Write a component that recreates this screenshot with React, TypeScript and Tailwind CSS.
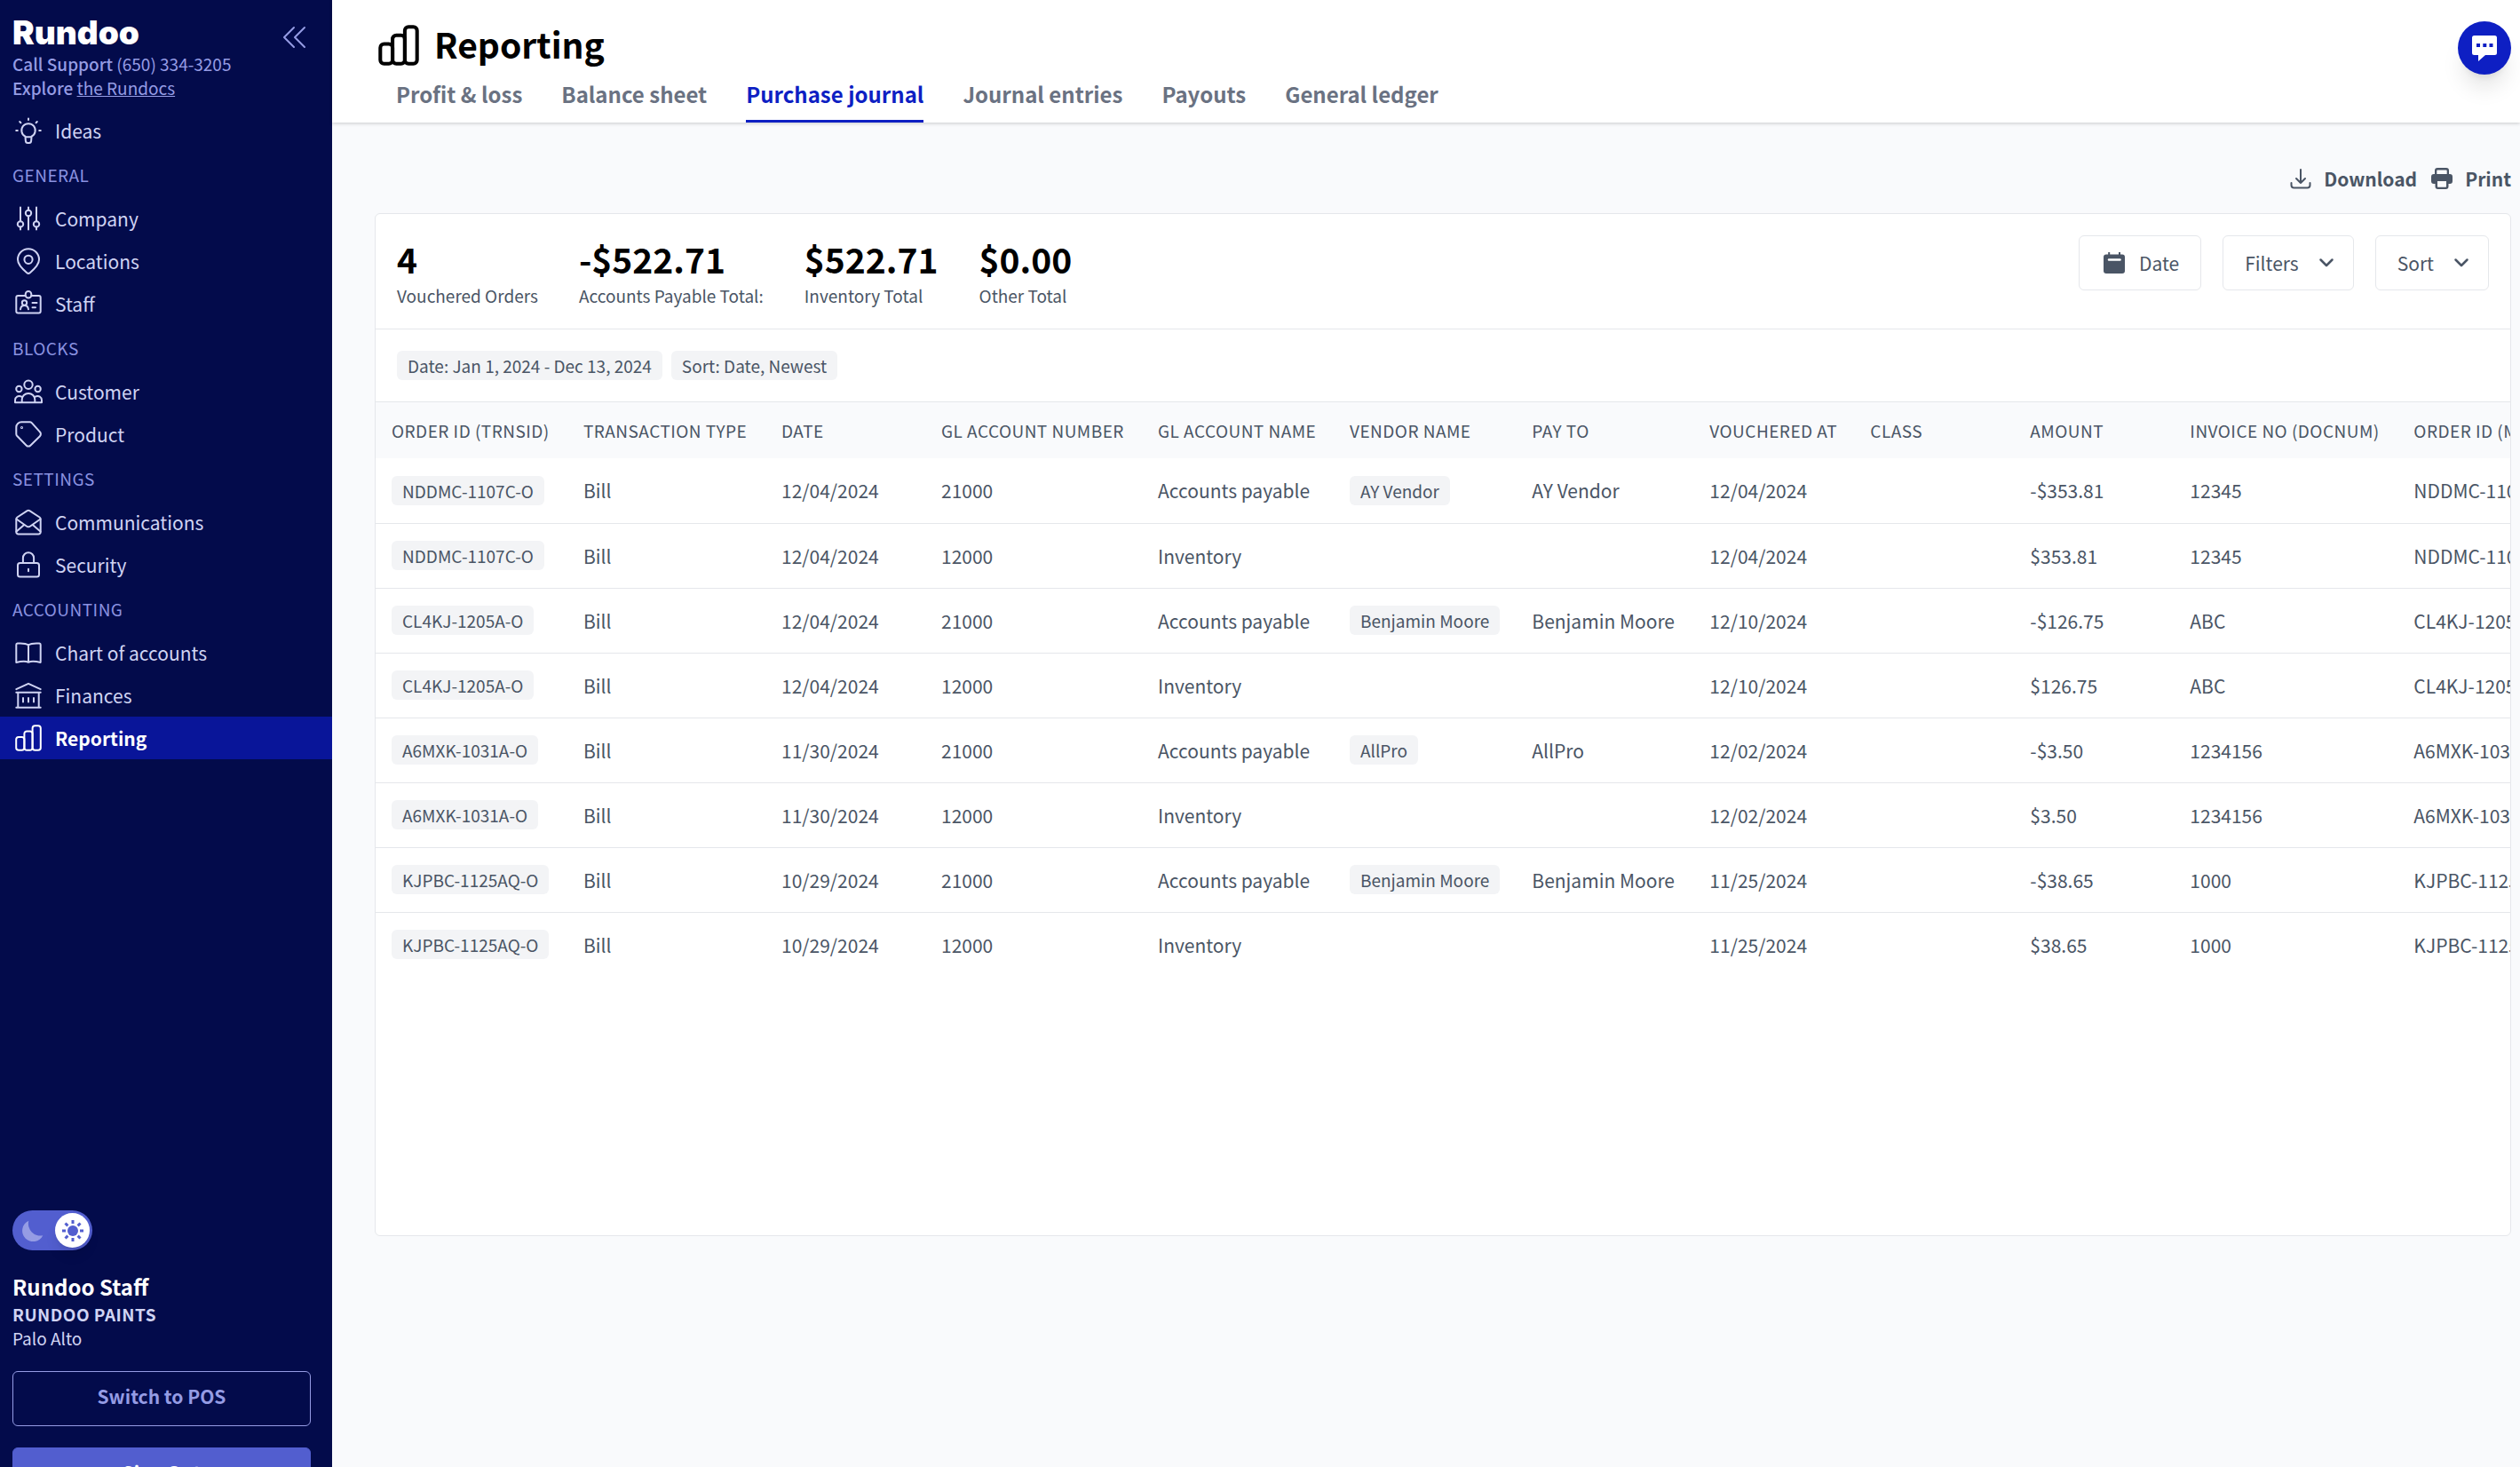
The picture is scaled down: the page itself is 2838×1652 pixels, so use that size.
import React, { useState } from 'react';

type IconProps = { className?: string; strokeWidth?: number };

const Icon: React.FC<IconProps & { children: React.ReactNode }> = ({ className = 'w-8 h-8', strokeWidth = 2, children }) => (
  <svg
    viewBox="0 0 32 32"
    className={`${className} shrink-0`}
    fill="none"
    stroke="currentColor"
    strokeWidth={strokeWidth}
    strokeLinecap="round"
    strokeLinejoin="round"
    aria-hidden="true"
  >
    {children}
  </svg>
);

const IdeasIcon = () => (
  <Icon>
    <path d="M12.5 23.3v-.6a7.7 7.7 0 1 1 7 0v.6M12.5 23.3h7l-.4 4.6a2.2 2.2 0 0 1-2.2 2h-1.8a2.2 2.2 0 0 1-2.2-2z" />
    <path d="M16 2.5v1.6M2.2 16h1.6M28.2 16h1.6M6.2 6l1.2 1.2M25.8 6l-1.2 1.2" />
  </Icon>
);

const CompanyIcon = () => (
  <Icon>
    <circle cx="7" cy="22.4" r="3.2" />
    <circle cx="16" cy="10" r="3.2" />
    <circle cx="25" cy="22.4" r="3.2" />
    <path d="M7 3.5v15.7M7 25.6v3M16 3.5v3.3M16 13.2v15.4M25 3.5v15.7M25 25.6v3" />
  </Icon>
);

const LocationsIcon = () => (
  <Icon>
    <path d="M16 2.3a12 12 0 0 1 12 12c0 5.7-6.2 11.5-10.3 14.9a2.7 2.7 0 0 1-3.4 0C10.2 25.8 4 20 4 14.3a12 12 0 0 1 12-12z" />
    <circle cx="16" cy="14.3" r="4.6" />
  </Icon>
);

const StaffIcon = () => (
  <Icon>
    <path d="M12.5 7H4.3a2 2 0 0 0-2 2v15.5a2 2 0 0 0 2 2h23.4a2 2 0 0 0 2-2V9a2 2 0 0 0-2-2h-8.2" />
    <rect x="12.7" y="2" width="6.6" height="7.6" rx="3.3" />
    <circle cx="11.5" cy="15" r="2.7" />
    <path d="M7 22.3c.3-2.7 2-4.3 4.5-4.3s4.2 1.6 4.5 4.3M20.5 15h5M20.5 20.3h3.5" />
  </Icon>
);

const CustomerIcon = () => (
  <Icon>
    <circle cx="16" cy="8.3" r="4.7" />
    <circle cx="5.4" cy="13" r="3.2" />
    <circle cx="26.6" cy="13" r="3.2" />
    <path d="M8.7 28.2v-3a7.3 7.3 0 0 1 14.6 0v3M1 28.2h30M1 28.2v-2.5c0-3.8 3.6-6 7.3-4M31 28.2v-2.5c0-3.8-3.6-6-7.3-4" />
  </Icon>
);

const ProductIcon = () => (
  <Icon>
    <path d="M8.3 2.3h9.4c.8 0 1.5.3 2 .8l9.2 10.2a3.5 3.5 0 0 1 0 4.9L18.2 28.7a3.1 3.1 0 0 1-4.4 0L3.1 17.8a3 3 0 0 1-.8-2V8.3a6 6 0 0 1 6-6z" />
    <circle cx="8.5" cy="8.5" r="0.5" />
  </Icon>
);

const CommunicationsIcon = () => (
  <Icon>
    <path d="M2.3 12.5c0-.9.4-1.5 1.1-2l11.3-7.3a2.4 2.4 0 0 1 2.6 0l11.3 7.3c.7.5 1.1 1.1 1.1 2v14.7a2.3 2.3 0 0 1-2.3 2.3H4.6a2.3 2.3 0 0 1-2.3-2.3z" />
    <path d="M2.5 12.5l11.3 8a3.8 3.8 0 0 0 4.4 0l11.3-8M2.5 26.5l8.7-7.5M29.5 26.5l-8.7-7.5" />
  </Icon>
);

const SecurityIcon = () => (
  <Icon>
    <rect x="4" y="14" width="24" height="15.5" rx="2.5" />
    <path d="M9.9 14V8.3a6.1 6.1 0 0 1 12.2 0V14M16 20.7v2.6" />
  </Icon>
);

const ChartIcon = () => (
  <Icon>
    <path d="M16 7.3C13.5 5.6 9.5 5.1 3.6 5.5a1.4 1.4 0 0 0-1.3 1.4v20c5.7-1.2 10.7-1.4 13.7-.2 3-1.2 8-1 13.7.2v-20a1.4 1.4 0 0 0-1.3-1.4C22.5 5.1 18.5 5.6 16 7.3zM16 7.3v19.4" />
  </Icon>
);

const FinancesIcon = () => (
  <Icon>
    <path d="M2.3 9.2L16 2.8l13.7 6.4M2.3 12.7h27.4M4.3 12.7v17M27.7 12.7v17M2.3 29.7h27.4M10 19v4.5M16 19v4.5M22 19v4.5" />
  </Icon>
);

const ReportingIcon: React.FC<IconProps> = (props) => (
  <Icon {...props}>
    <rect x="2.2" y="15" width="9.2" height="14.8" rx="2.8" />
    <path d="M11.4 17.5v-6.2a2.8 2.8 0 0 1 2.8-2.8h3.6a2.8 2.8 0 0 1 2.8 2.8V27a2.8 2.8 0 0 1-2.8 2.8h-3.6a2.8 2.8 0 0 1-2.8-2.8z" />
    <rect x="20.6" y="2.2" width="9.2" height="27.6" rx="2.8" />
  </Icon>
);

const ChevronDown = () => (
  <svg viewBox="0 0 18 18" className="w-[18px] h-[18px]" fill="none" stroke="currentColor" strokeWidth="2.5" strokeLinecap="round" strokeLinejoin="round" aria-hidden="true">
    <path d="M2.5 5.5L9 12l6.5-6.5" />
  </svg>
);

const navGroups = [
  { title: '', items: [{ label: 'Ideas', icon: <IdeasIcon /> }] },
  {
    title: 'General',
    items: [
      { label: 'Company', icon: <CompanyIcon /> },
      { label: 'Locations', icon: <LocationsIcon /> },
      { label: 'Staff', icon: <StaffIcon /> },
    ],
  },
  {
    title: 'Blocks',
    items: [
      { label: 'Customer', icon: <CustomerIcon /> },
      { label: 'Product', icon: <ProductIcon /> },
    ],
  },
  {
    title: 'Settings',
    items: [
      { label: 'Communications', icon: <CommunicationsIcon /> },
      { label: 'Security', icon: <SecurityIcon /> },
    ],
  },
  {
    title: 'Accounting',
    items: [
      { label: 'Chart of accounts', icon: <ChartIcon /> },
      { label: 'Finances', icon: <FinancesIcon /> },
      { label: 'Reporting', icon: <ReportingIcon /> },
    ],
  },
];

const tabs = ['Profit & loss', 'Balance sheet', 'Purchase journal', 'Journal entries', 'Payouts', 'General ledger'];

const stats = [
  { value: '4', label: 'Vouchered Orders' },
  { value: '-$522.71', label: 'Accounts Payable Total:' },
  { value: '$522.71', label: 'Inventory Total' },
  { value: '$0.00', label: 'Other Total' },
];

const columns = [
  { label: 'Order ID (TRNSID)', width: 'w-[216px]' },
  { label: 'Transaction type', width: 'w-[223px]' },
  { label: 'Date', width: 'w-[180px]' },
  { label: 'GL account number', width: 'w-[244px]' },
  { label: 'GL account name', width: 'w-[216px]' },
  { label: 'Vendor name', width: 'w-[203px]' },
  { label: 'Pay to', width: 'w-[200px]' },
  { label: 'Vouchered at', width: 'w-[181px]' },
  { label: 'Class', width: 'w-[180px]' },
  { label: 'Amount', width: 'w-[180px]' },
  { label: 'Invoice no (DOCNUM)', width: 'w-[252px]' },
  { label: 'Order ID (MEMO)', width: 'w-[240px]' },
];

const rows = [
  { id: 'NDDMC-1107C-O', date: '12/04/2024', gl: '21000', name: 'Accounts payable', vendor: 'AY Vendor', vouchered: '12/04/2024', amount: '-$353.81', invoice: '12345' },
  { id: 'NDDMC-1107C-O', date: '12/04/2024', gl: '12000', name: 'Inventory', vendor: '', vouchered: '12/04/2024', amount: '$353.81', invoice: '12345' },
  { id: 'CL4KJ-1205A-O', date: '12/04/2024', gl: '21000', name: 'Accounts payable', vendor: 'Benjamin Moore', vouchered: '12/10/2024', amount: '-$126.75', invoice: 'ABC' },
  { id: 'CL4KJ-1205A-O', date: '12/04/2024', gl: '12000', name: 'Inventory', vendor: '', vouchered: '12/10/2024', amount: '$126.75', invoice: 'ABC' },
  { id: 'A6MXK-1031A-O', date: '11/30/2024', gl: '21000', name: 'Accounts payable', vendor: 'AllPro', vouchered: '12/02/2024', amount: '-$3.50', invoice: '1234156' },
  { id: 'A6MXK-1031A-O', date: '11/30/2024', gl: '12000', name: 'Inventory', vendor: '', vouchered: '12/02/2024', amount: '$3.50', invoice: '1234156' },
  { id: 'KJPBC-1125AQ-O', date: '10/29/2024', gl: '21000', name: 'Accounts payable', vendor: 'Benjamin Moore', vouchered: '11/25/2024', amount: '-$38.65', invoice: '1000' },
  { id: 'KJPBC-1125AQ-O', date: '10/29/2024', gl: '12000', name: 'Inventory', vendor: '', vouchered: '11/25/2024', amount: '$38.65', invoice: '1000' },
];

const Chip: React.FC<{ children: React.ReactNode }> = ({ children }) => (
  <span className="block w-fit h-[33px] px-3 rounded-md bg-[#f3f4f6] text-[19px] leading-[33px] whitespace-nowrap">{children}</span>
);

const ThemeToggle = () => {
  const [light, setLight] = useState(true);

  return (
    <label className="flex items-center justify-between w-[90px] h-[45px] p-[3px] rounded-full bg-[#525ecf] cursor-pointer">
      <input type="checkbox" className="sr-only" aria-label="Light theme" checked={light} onChange={() => setLight(!light)} />
      <svg viewBox="0 0 24 24" className="w-6 h-6 ml-2" fill="#959ce4" aria-hidden="true">
        <path d="M7.3.8A13.5 13.5 0 0 0 23.3 17.2 12.2 12.2 0 1 1 7.3.8z" />
      </svg>
      <span className="flex items-center justify-center w-[39px] h-[39px] rounded-full bg-white shadow-lg">
        <svg viewBox="0 0 24 24" className="w-6 h-6" fill="none" stroke="#525ecf" strokeWidth="3" aria-hidden="true">
          <circle cx="12" cy="12" r="6" fill="#525ecf" stroke="none" />
          <path d="M12 0v4M12 20v4M0 12h4M20 12h4M3.5 3.5l2.9 2.9M17.6 17.6l2.9 2.9M3.5 20.5l2.9-2.9M17.6 6.4l2.9-2.9" />
        </svg>
      </span>
    </label>
  );
};

const Sidebar = () => (
  <aside className="flex flex-col shrink-0 w-[374px] h-[calc(100vh+54px)] pb-[14px] bg-[#030b4b] text-[#d0d4f3]">
    <div className="flex justify-between h-[123px] pl-[14px] pr-7 pt-4">
      <div className="text-[19px] leading-[27px] text-[#959ce4]">
        <div className="font-['Inter'] font-black text-[37px] leading-[42px] text-white">Rundoo</div>
        <div><span className="font-medium">Call Support</span> (650) 334-3205</div>
        <div><span className="font-medium">Explore</span> <a href="#rundocs" className="underline">the Rundocs</a></div>
      </div>
      <button className="self-start mt-[10px] text-[#959ce4]" aria-label="Collapse menu">
        <svg viewBox="0 0 32 32" className="w-8 h-8" fill="none" stroke="currentColor" strokeWidth="2" strokeLinecap="round" strokeLinejoin="round">
          <path d="M17 5L6 16l11 11M29 5L18 16l11 11" />
        </svg>
      </button>
    </div>

    <nav>
      {navGroups.map((group) => (
        <div key={group.title}>
          {group.title && (
            <h2 className="px-[14px] text-[19px] leading-[51px] uppercase tracking-wide text-[#8a92e0]">{group.title}</h2>
          )}
          {group.items.map((item) => (
            <a
              key={item.label}
              href={`#${item.label}`}
              className={`flex items-center gap-[14px] h-12 px-4 text-[21px] leading-8 ${item.label === 'Reporting' ? 'bg-[#091599] text-white font-bold' : ''}`}
            >
              {item.icon}
              {item.label}
            </a>
          ))}
        </div>
      ))}
    </nav>

    {/* Account */}
    <div className="mt-auto pl-[14px] pr-6">
      <ThemeToggle />
      <div className="mt-6 font-bold text-[24px] leading-[34px] text-white">Rundoo Staff</div>
      <div className="font-bold text-[19px] leading-[27px] uppercase tracking-wide">Rundoo Paints</div>
      <div className="text-[19px] leading-[27px]">Palo Alto</div>
      <div className="flex flex-col gap-6 mt-6">
        <button className="h-[62px] pb-1 rounded-md border border-[#959ce4] text-[21px] font-bold text-[#959ce4]">Switch to POS</button>
        <button className="h-[62px] pb-1 rounded-md border border-[#525ecf] bg-[#525ecf] text-[21px] font-bold text-white">Sign Out</button>
      </div>
    </div>
  </aside>
);

const Header = () => (
  <header className="relative h-[138px] bg-white shadow-[0_1px_4px_rgba(0,0,0,0.2)]">
    <div className="flex items-center gap-4 h-[76px] pl-[51px] pt-[26px] text-black">
      <ReportingIcon className="w-12 h-12" strokeWidth={2.7} />
      <h1 className="text-[39px] leading-[46px] pb-1 font-bold">Reporting</h1>
    </div>
    <nav className="flex gap-11 pl-[72px]">
      {tabs.map((tab) => (
        <a
          key={tab}
          href={`#${tab}`}
          className={`h-[62px] text-[24px] leading-[60px] font-bold border-b-3 ${tab === 'Purchase journal' ? 'text-[#0e1fc3] border-[#0e1fc3]' : 'text-gray-500 border-transparent'}`}
        >
          {tab}
        </a>
      ))}
    </nav>
  </header>
);

const ReportTable = () => (
  <table className="table-fixed w-max text-left">
    <colgroup>
      {columns.map((col) => (
        <col key={col.label} className={col.width} />
      ))}
    </colgroup>
    <thead className="bg-[#f9fafc] text-[19px] uppercase tracking-wide">
      <tr className="h-[63px]">
        {columns.map((col) => (
          <th key={col.label} className="px-[18px] py-0 font-normal leading-[27px] whitespace-nowrap">{col.label}</th>
        ))}
      </tr>
    </thead>
    <tbody className="divide-y divide-gray-200 text-[21px] leading-8 whitespace-nowrap">
      {rows.map((row, i) => (
        <tr key={i} className="h-[73px]">
          <td className="px-[18px]"><Chip>{row.id}</Chip></td>
          <td className="px-[18px]">Bill</td>
          <td className="px-[18px]">{row.date}</td>
          <td className="px-[18px]">{row.gl}</td>
          <td className="px-[18px]">{row.name}</td>
          <td className="px-[18px]">{row.vendor && <Chip>{row.vendor}</Chip>}</td>
          <td className="px-[18px]">{row.vendor}</td>
          <td className="px-[18px]">{row.vouchered}</td>
          <td className="px-[18px]"></td>
          <td className="px-[18px]">{row.amount}</td>
          <td className="px-[18px]">{row.invoice}</td>
          <td className="px-[18px]">{row.id}</td>
        </tr>
      ))}
    </tbody>
  </table>
);

export default function App() {
  return (
    <div className="flex h-screen overflow-hidden bg-[#f9fafc] text-gray-600 font-['Noto_Sans_CJK_SC',sans-serif]">
      <Sidebar />
      <main className="flex-1 min-w-0">
        <Header />

        <div className="pl-12 pr-[10px]">
          <div className="flex justify-end gap-4 pt-[47px] pb-[23px] text-[21px] leading-8 font-bold">
            <button className="flex items-center gap-[14px]">
              <svg viewBox="0 0 24 24" className="w-6 h-6" fill="none" stroke="currentColor" strokeWidth="2" strokeLinecap="round" strokeLinejoin="round" aria-hidden="true">
                <path d="M12 2v15M7 12l5 5 5-5M1.5 17v2.5a3 3 0 0 0 3 3h15a3 3 0 0 0 3-3V17" />
              </svg>
              Download
            </button>
            <button className="flex items-center gap-[14px]">
              <svg viewBox="0 0 24 24" className="w-6 h-6" fill="currentColor" aria-hidden="true">
                <path fillRule="evenodd" d="M7 0h10a3 3 0 0 1 3 3v4h1a3 3 0 0 1 3 3v5a3 3 0 0 1-3 3h-1.5v3a3 3 0 0 1-3 3h-9a3 3 0 0 1-3-3v-3H3a3 3 0 0 1-3-3v-5a3 3 0 0 1 3-3h1V3a3 3 0 0 1 3-3zm0 2.5a.7.7 0 0 0-.7.7V7h11.4V3.2a.7.7 0 0 0-.7-.7zM7 15v6a.7.7 0 0 0 .7.7h8.6a.7.7 0 0 0 .7-.7v-6z" />
              </svg>
              Print
            </button>
          </div>

          <section className="h-[1152px] overflow-hidden rounded-md border border-gray-200 bg-white">
            <div className="flex items-start justify-between h-[130px] px-6 pt-6 border-b border-gray-200">
              <dl className="flex gap-[46px]">
                {stats.map((stat) => (
                  <div key={stat.label} className="flex flex-col-reverse justify-end">
                    <dt className="text-[19px] leading-[27px]">{stat.label}</dt>
                    <dd className="text-[39px] leading-[52px] pb-[2px] font-bold text-black">{stat.value}</dd>
                  </div>
                ))}
              </dl>
              <div className="flex gap-6 text-[21px] leading-8">
                <button className="flex items-center gap-4 h-[62px] pl-[27px] pr-6 border border-gray-200 rounded-md">
                  <svg viewBox="0 0 24 24" className="w-6 h-6" aria-hidden="true">
                    <path d="M6.2 0v4M18 0v4" stroke="currentColor" strokeWidth="2" />
                    <rect y="2.5" width="24" height="21.5" rx="3" fill="currentColor" />
                    <path d="M6 8.5h12.5" stroke="white" strokeWidth="2.5" strokeLinecap="round" />
                  </svg>
                  Date
                </button>
                <button className="flex items-center gap-[22px] h-[62px] pl-6 pr-[21px] border border-gray-200 rounded-md">
                  Filters
                  <ChevronDown />
                </button>
                <button className="flex items-center gap-[22px] h-[62px] pl-6 pr-[21px] border border-gray-200 rounded-md">
                  Sort
                  <ChevronDown />
                </button>
              </div>
            </div>
            <div className="flex gap-[10px] px-6 py-6 border-b border-gray-200">
              <Chip>Date: Jan 1, 2024 - Dec 13, 2024</Chip>
              <Chip>Sort: Date, Newest</Chip>
            </div>
            <ReportTable />
          </section>
        </div>
      </main>

      <button className="fixed top-6 right-[10px] flex items-center justify-center w-[60px] h-[60px] rounded-full bg-[#0e1fc3] shadow-xl" aria-label="Open chat">
        <svg viewBox="0 0 30 30" className="w-[30px] h-[30px]" fill="white">
          <path fillRule="evenodd" d="M3.5 1h23A2.5 2.5 0 0 1 29 3.5v17a2.5 2.5 0 0 1-2.5 2.5H16l-8 7v-7H3.5A2.5 2.5 0 0 1 1 20.5v-17A2.5 2.5 0 0 1 3.5 1zM6 10v4h4v-4zM13.3 10v4h4v-4zM20.5 10v4h4v-4z" />
        </svg>
      </button>
    </div>
  );
}
